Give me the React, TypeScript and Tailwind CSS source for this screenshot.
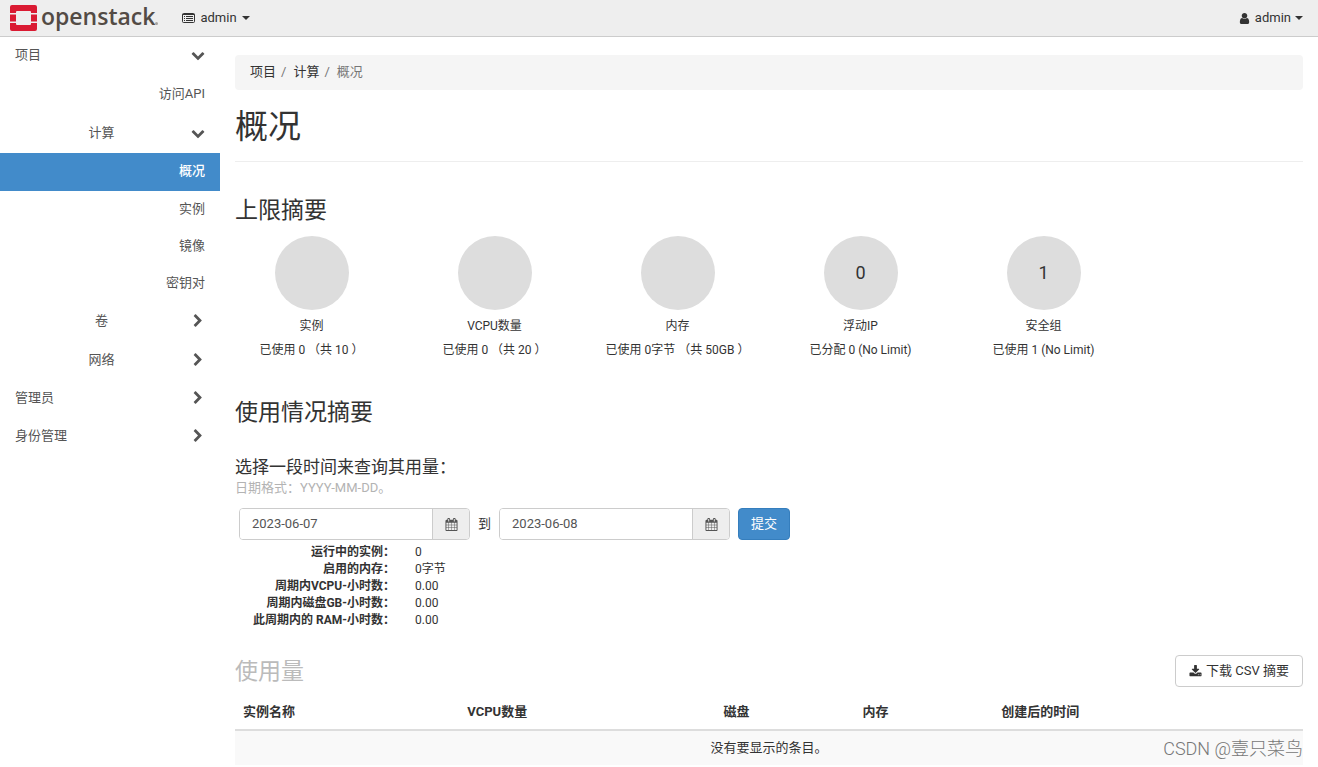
import React from "react";

type IconProps = { className?: string };

function Glyph({ d, className = "size-[13px]" }: { d: string; className?: string }) {
  return (
    <svg viewBox="0 0 1792 1792" fill="currentColor" aria-hidden="true" className={`shrink-0 ${className}`}>
      <path d={d} />
    </svg>
  );
}

const CHEVRON_DOWN =
  "M1683 808l-742 741q-19 19-45 19t-45-19l-742-741q-19-19-19-45.5t19-45.5l166-165q19-19 45-19t45 19l531 531 531-531q19-19 45-19t45 19l166 165q19 19 19 45.5t-19 45.5z";
const CHEVRON_RIGHT =
  "M1363 877l-742 742q-19 19-45 19t-45-19l-166-166q-19-19-19-45t19-45l531-531-531-531q-19-19-19-45t19-45l166-166q19-19 45-19t45 19l742 742q19 19 19 45t-19 45z";
const USER =
  "M1536 1399q0 109-62.5 187t-150.5 78h-854q-88 0-150.5-78t-62.5-187q0-85 8.5-160.5t31.5-152 58.5-131 94-89 134.500-34.500q131 128 313 128t313-128q76 0 134.5 34.5t94 89 58.5 131 31.5 152 8.5 160.5zm-256-887q0 159-112.5 271.5t-271.5 112.5-271.5-112.5-112.5-271.5 112.5-271.5 271.5-112.5 271.5 112.5 112.5 271.5z";
const CALENDAR =
  "M192 1664h288v-288h-288v288zm352 0h320v-288h-320v288zm-352-352h288v-320h-288v320zm352 0h320v-320h-320v320zm-352-384h288v-288h-288v288zm736 736h320v-288h-320v288zm-384-736h320v-288h-320v288zm768 736h288v-288h-288v288zm-384-352h320v-320h-320v320zm-352-864v-288q0-13-9.5-22.5t-22.5-9.5h-64q-13 0-22.5 9.5t-9.5 22.5v288q0 13 9.5 22.5t22.5 9.5h64q13 0 22.5-9.5t9.5-22.5zm736 864h288v-320h-288v320zm-384-384h320v-288h-320v288zm384 0h288v-288h-288v288zm32-480v-288q0-13-9.5-22.5t-22.5-9.5h-64q-13 0-22.5 9.5t-9.5 22.5v288q0 13 9.5 22.5t22.5 9.5h64q13 0 22.5-9.5t9.5-22.5zm384-64v1280q0 52-38 90t-90 38h-1408q-52 0-90-38t-38-90v-1280q0-52 38-90t90-38h128v-96q0-66 47-113t113-47h64q66 0 113 47t47 113v96h384v-96q0-66 47-113t113-47h64q66 0 113 47t47 113v96h128q52 0 90 38t38 90z";
const DOWNLOAD =
  "M1344 1344q0-26-19-45t-45-19-45 19-19 45 19 45 45 19 45-19 19-45zm256 0q0-26-19-45t-45-19-45 19-19 45 19 45 45 19 45-19 19-45zm128-224v320q0 40-28 68t-68 28h-1472q-40 0-68-28t-28-68v-320q0-40 28-68t68-28h465l135 136q58 56 136 56t136-56l136-136h464q40 0 68 28t28 68zm-325-569q17 41-14 70l-448 448q-18 19-45 19t-45-19l-448-448q-31-29-14-70 17-39 59-39h256v-448q0-26 19-45t45-19h256q26 0 45 19t19 45v448h256q42 0 59 39z";

function ListIcon({ className }: IconProps) {
  return (
    <svg viewBox="0 0 13 10" aria-hidden="true" className={className}>
      <rect x="0.5" y="0.5" width="12" height="9" rx="1" fill="none" stroke="currentColor" />
      <path d="M0.5 1.5h12M2 3.500h1M4 3.500h7M2 5.500h1M4 5.500h7M2 7.500h1M4 7.500h7" stroke="currentColor" fill="none" />
    </svg>
  );
}

function Caret() {
  return (
    <svg viewBox="0 0 8 4" fill="currentColor" aria-hidden="true" className="h-1 w-2">
      <path d="M0 0h8L4 4z" />
    </svg>
  );
}

function Logo() {
  return (
    <a href="#" aria-label="openstack" className="flex items-center gap-1">
      <svg viewBox="0 0 27 27" aria-hidden="true" className="size-[27px]">
        <path
          fill="#da1a32"
          d="M2 0h23a2 2 0 0 1 2 2v6h-6V7a1 1 0 0 0-1-1H7a1 1 0 0 0-1 1v1H0V2a2 2 0 0 1 2-2zM0 9.500h6v7H0zM21 9.500h6v7h-6zM0 18h6v1a1 1 0 0 0 1 1h13a1 1 0 0 0 1-1v-1h6v6a2 2 0 0 1-2 2H2a2 2 0 0 1-2-2z"
        />
      </svg>
      <span className="flex items-end pb-[5px]">
        <span className="font-['Open_Sans',sans-serif] text-[23px] leading-[26px] font-semibold text-[#534b45]">
          openstack
        </span>
        <svg viewBox="0 0 3 3" aria-hidden="true" className="mb-1 size-[3px]">
          <circle cx="1.500" cy="1.500" r="1.500" fill="#a5a19e" />
        </svg>
      </span>
    </a>
  );
}

function GroupRow({
  label,
  open = false,
  nested = false,
  className,
}: {
  label: string;
  open?: boolean;
  nested?: boolean;
  className: string;
}) {
  return (
    <button
      type="button"
      aria-expanded={open}
      className={`flex w-full items-center pr-[15px] pb-[2px] ${nested ? "pl-3" : "pl-[15px]"} ${className}`}
    >
      <span className={nested ? "flex-1 text-center" : "flex-1 text-left"}>{label}</span>
      <Glyph d={open ? CHEVRON_DOWN : CHEVRON_RIGHT} className="size-[14px]" />
    </button>
  );
}

function LinkRow({ label, active = false, className }: { label: string; active?: boolean; className: string }) {
  return (
    <a
      href="#"
      className={`flex items-center justify-end px-[15px] pb-[2px] ${active ? "bg-[#428bca] font-medium text-white" : ""} ${className}`}
    >
      {label}
    </a>
  );
}

const quotas = [
  { name: "实例", usage: "已使用 0 （共 10 ）", value: "" },
  { name: "VCPU数量", usage: "已使用 0 （共 20 ）", value: "" },
  { name: "内存", usage: "已使用 0字节 （共 50GB ）", value: "" },
  { name: "浮动IP", usage: "已分配 0 (No Limit)", value: "0" },
  { name: "安全组", usage: "已使用 1 (No Limit)", value: "1" },
];

const usage = [
  ["运行中的实例：", "0"],
  ["启用的内存：", "0字节"],
  ["周期内VCPU-小时数：", "0.00"],
  ["周期内磁盘GB-小时数：", "0.00"],
  ["此周期内的 RAM-小时数：", "0.00"],
];

function DateField({ id, label, value }: { id: string; label: string; value: string }) {
  return (
    <div className="flex h-8 w-[231px] overflow-hidden rounded border border-[#ccc]">
      <input
        id={id}
        aria-label={label}
        defaultValue={value}
        className="min-w-0 flex-1 bg-white px-3 text-[#555] outline-none"
      />
      <button
        type="button"
        aria-label="选择日期"
        className="flex w-[37px] items-center justify-center border-l border-[#ccc] bg-[#eee] text-[#555]"
      >
        <Glyph d={CALENDAR} />
      </button>
    </div>
  );
}

export default function App() {
  return (
    <div className="relative min-h-screen bg-white font-[Roboto,'Noto_Sans_CJK_SC',sans-serif] text-[13px] leading-[18px] text-[#333]">
      <header className="flex h-[37px] items-center justify-between border-b border-[#ccc] bg-[#eee] pr-[15px] pl-[10px]">
        <div className="flex items-center gap-6">
          <Logo />
          <button type="button" className="flex items-center gap-[5px]">
            <ListIcon className="h-[10px] w-[13px]" />
            admin
            <Caret />
          </button>
        </div>
        <button type="button" className="flex items-center gap-1">
          <Glyph d={USER} />
          admin
          <Caret />
        </button>
      </header>

      <div className="flex">
        <nav className="w-[220px] shrink-0 text-[#555]">
          <GroupRow label="项目" open className="h-[38px]" />
          <LinkRow label="访问API" className="h-[39px]" />
          <GroupRow label="计算" open nested className="h-[39px]" />
          <LinkRow label="概况" active className="h-[38px]" />
          <LinkRow label="实例" className="h-[37px]" />
          <LinkRow label="镜像" className="h-[37px]" />
          <LinkRow label="密钥对" className="h-[37px]" />
          <GroupRow label="卷" nested className="h-[39px]" />
          <GroupRow label="网络" nested className="h-[39px]" />
          <GroupRow label="管理员" className="h-[38px]" />
          <GroupRow label="身份管理" className="h-[38px]" />
        </nav>

        <main className="min-w-0 flex-1 px-[15px] pt-[18px]">
          <ol className="flex h-[35px] items-center rounded bg-[#f5f5f5] px-[15px] pb-px">
            <li>
              <a href="#">项目</a>
              <span className="px-[5px] text-[#777]">/</span>
            </li>
            <li className="pl-[2px]">
              <a href="#">计算</a>
              <span className="px-[5px] text-[#777]">/</span>
            </li>
            <li className="pl-[2px] text-[#777]">概况</li>
          </ol>

          <h1 className="mt-[17px] border-b border-[#eee] pb-[14px] text-[33px] leading-10">概况</h1>

          <h2 className="mt-9 text-[23px] leading-[25px]">上限摘要</h2>
          <div className="mt-[13px] flex flex-wrap gap-x-[30px]">
            {quotas.map((q) => (
              <div key={q.name} className="flex w-[153px] flex-col items-center text-[12px] whitespace-nowrap">
                <div className="flex size-[74px] items-center justify-center rounded-full bg-[#ddd] text-[18px]">
                  {q.value}
                </div>
                <div className="mt-[7px] leading-[18px]">{q.name}</div>
                <div className="mt-[6px] leading-[18px]">{q.usage}</div>
              </div>
            ))}
          </div>

          <h2 className="mt-[41px] text-[23px] leading-[26px]">使用情况摘要</h2>
          <h3 className="mt-[31px] text-[17px] leading-5">选择一段时间来查询其用量：</h3>
          <p className="mt-[2px] text-[#b3b3b3]">日期格式：YYYY-MM-DD。</p>
          <form className="mt-[11px] flex items-center gap-2 pl-1" onSubmit={(e) => e.preventDefault()}>
            <DateField id="start" label="开始日期" value="2023-06-07" />
            <label htmlFor="end">到</label>
            <DateField id="end" label="结束日期" value="2023-06-08" />
            <button type="submit" className="h-8 rounded border border-[#357ebd] bg-[#428bca] px-3 text-white">
              提交
            </button>
          </form>
          <dl className="mt-1 text-[12px] leading-[17px]">
            {usage.map(([term, value]) => (
              <div key={term} className="flex gap-5">
                <dt className="w-[160px] text-right font-bold whitespace-nowrap">{term}</dt>
                <dd>{value}</dd>
              </div>
            ))}
          </dl>

          <div className="mt-[26px] flex items-center justify-between">
            <h2 className="pt-[2px] text-[23px] leading-[26px] text-[#bbb]">使用量</h2>
            <button
              type="button"
              className="flex h-8 items-center gap-1 rounded border border-[#ccc] bg-white px-[13px]"
            >
              <Glyph d={DOWNLOAD} />
              下载 CSV 摘要
            </button>
          </div>
          <table className="mt-2 w-full table-fixed text-left">
            <colgroup>
              <col className="w-[21%]" />
              <col className="w-[24%]" />
              <col className="w-[13%]" />
              <col className="w-[13%]" />
              <col className="w-[29%]" />
            </colgroup>
            <thead>
              <tr className="border-b-2 border-[#ddd]">
                {["实例名称", "VCPU数量", "磁盘", "内存", "创建后的时间"].map((h) => (
                  <th key={h} scope="col" className="px-2 py-2 font-bold">
                    {h}
                  </th>
                ))}
              </tr>
            </thead>
            <tbody>
              <tr className="bg-[#f9f9f9]">
                <td colSpan={5} className="p-2 text-center">
                  没有要显示的条目。
                </td>
              </tr>
            </tbody>
          </table>
        </main>
      </div>

      <div className="absolute right-[15px] bottom-[6px] text-[18px] leading-6 font-light text-[#777]">
        CSDN @壹只菜鸟
      </div>
    </div>
  );
}
